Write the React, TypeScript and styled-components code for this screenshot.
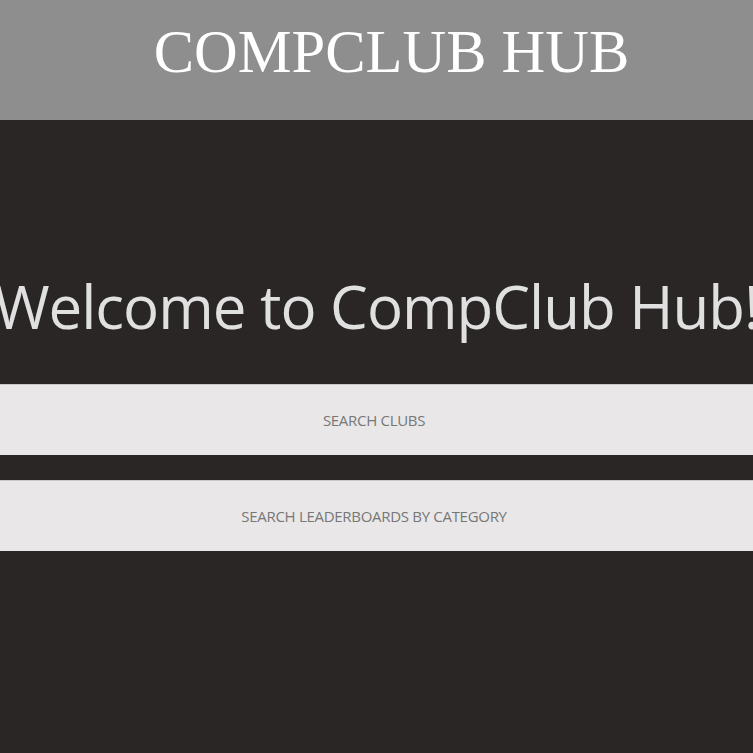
import React from "react";
import styled, { createGlobalStyle } from "styled-components";

const Global = createGlobalStyle`
  html, body { margin: 0; padding: 0; background: #292625; overflow: hidden; }
  #root { min-height: 753px; }
`;

const Page = styled.div`
  width: 753px;
  min-height: 753px;
  background: #292625;
  display: flex;
  flex-direction: column;
`;

const Header = styled.header`
  height: 120px;
  background: #8e8e8e;
  display: flex;
  align-items: flex-start;
  justify-content: center;
  padding-left: 30px;
  box-sizing: border-box;
`;

const Title = styled.h1`
  margin: 14px 0 0;
  font-family: "Liberation Serif", "Times New Roman", serif;
  font-weight: 400;
  font-size: 60.5px;
  line-height: 76px;
  color: #ffffff;
`;

const Main = styled.main`
  display: flex;
  flex-direction: column;
  align-items: stretch;
  padding-top: 146px;
  overflow: hidden;
`;

const Welcome = styled.h2`
  margin: 0 -40px 38px;
  text-align: center;
  white-space: nowrap;
  font-family: "Open Sans", "Noto Sans", sans-serif;
  font-weight: 400;
  font-size: 60px;
  line-height: 80px;
  color: #e0e0e0;
  letter-spacing: -1px;
`;

const ButtonStack = styled.div`
  display: flex;
  flex-direction: column;
  gap: 25px;
`;

const NavButton = styled.button`
  height: 71px;
  width: 100%;
  background: #e9e7e7;
  border: none;
  border-top: 1px solid #c9c7c7;
  color: #777;
  font-family: "Open Sans", "Noto Sans", sans-serif;
  font-size: 15px;
  letter-spacing: -0.3px;
  text-transform: uppercase;
  padding: 0 5px 0 0;
  cursor: pointer;
`;

export default function App() {
  return (
    <Page>
      <Global />
      <Header>
        <Title>COMPCLUB HUB</Title>
      </Header>
      <Main>
        <Welcome>Welcome to CompClub Hub!</Welcome>
        <ButtonStack>
          <NavButton>Search Clubs</NavButton>
          <NavButton>Search Leaderboards by Category</NavButton>
        </ButtonStack>
      </Main>
    </Page>
  );
}
